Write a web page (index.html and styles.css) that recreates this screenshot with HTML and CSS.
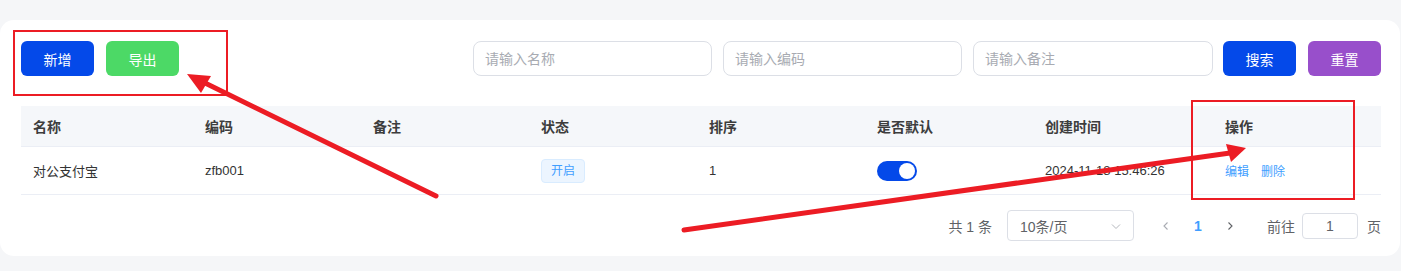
FILE: index.html
```html
<!DOCTYPE html>
<html lang="zh-CN">
<head>
    <meta charset="UTF-8">
    <meta name="viewport" content="width=device-width, initial-scale=1.0">
    <title>支付方式</title>
    <link rel="stylesheet" href="styles.css">
</head>
<body>
    <div class="page">
        <section class="card">
            <!-- Toolbar -->
            <div class="toolbar">
                <div class="actions">
                    <button class="btn btn-blue">新增</button>
                    <button class="btn btn-green">导出</button>
                </div>
                <div class="filters">
                    <input class="field" type="text" placeholder="请输入名称">
                    <input class="field" type="text" placeholder="请输入编码">
                    <input class="field" type="text" placeholder="请输入备注">
                    <button class="btn btn-blue search">搜索</button>
                    <button class="btn btn-purple reset">重置</button>
                </div>
            </div>

            <!-- Table -->
            <table class="grid">
                <colgroup>
                    <col style="width:172px">
                    <col style="width:168px">
                    <col style="width:168px">
                    <col style="width:168px">
                    <col style="width:168px">
                    <col style="width:168px">
                    <col style="width:180px">
                    <col style="width:168px">
                </colgroup>
                <thead>
                    <tr>
                        <th>名称</th>
                        <th>编码</th>
                        <th>备注</th>
                        <th>状态</th>
                        <th>排序</th>
                        <th>是否默认</th>
                        <th>创建时间</th>
                        <th>操作</th>
                    </tr>
                </thead>
                <tbody>
                    <tr>
                        <td>对公支付宝</td>
                        <td>zfb001</td>
                        <td></td>
                        <td><span class="tag">开启</span></td>
                        <td>1</td>
                        <td><span class="switch on"><span class="knob"></span></span></td>
                        <td>2024-11-18 15:46:26</td>
                        <td><a class="link">编辑</a><a class="link">删除</a></td>
                    </tr>
                </tbody>
            </table>

            <!-- Pagination -->
            <div class="pager">
                <span class="total">共 1 条</span>
                <div class="size-select">
                    <span>10条/页</span>
                    <svg width="12" height="12" viewBox="0 0 12 12"><path d="M2 4.5 L6 8.5 L10 4.5" fill="none" stroke="#b4b7bd" stroke-width="1"/></svg>
                </div>
                <span class="nav">
                    <svg width="10" height="10" viewBox="0 0 10 10"><path d="M6.5 1.5 L3 5 L6.5 8.5" fill="none" stroke="#a8abb2" stroke-width="1.1"/></svg>
                </span>
                <span class="page-num">1</span>
                <span class="nav">
                    <svg width="10" height="10" viewBox="0 0 10 10"><path d="M3.5 1.5 L7 5 L3.5 8.5" fill="none" stroke="#606266" stroke-width="1.1"/></svg>
                </span>
                <span class="goto">前往</span>
                <input class="jump" type="text" value="1">
                <span class="unit">页</span>
            </div>
        </section>
    </div>

    <!-- Red annotations drawn on top of the screenshot -->
    <svg class="marks" width="1401" height="271" viewBox="0 0 1401 271">
        <rect x="14" y="31" width="213" height="64" fill="none" stroke="#ec1c24" stroke-width="2"/>
        <rect x="1192" y="101" width="162" height="98" fill="none" stroke="#ec1c24" stroke-width="2"/>
        <line x1="436" y1="196" x2="203" y2="82" stroke="#ec1c24" stroke-width="5" stroke-linecap="round"/>
        <polygon points="187,74 211,76 201,93" fill="#ec1c24"/>
        <line x1="684" y1="230" x2="1230" y2="153" stroke="#ec1c24" stroke-width="5" stroke-linecap="round"/>
        <polygon points="1246,148 1226,144 1231,162" fill="#ec1c24"/>
    </svg>
</body>
</html>
```

FILE: styles.css
```css
/* Page */
body {
    margin: 0;
    background-color: #f5f6f8;
    font-family: "Liberation Sans", "Noto Sans CJK SC", sans-serif;
    color: #333;
    position: relative;
    width: 1401px;
    height: 271px;
    overflow: hidden;
}

.page {
    padding-top: 20px;
}

.card {
    background-color: #fff;
    width: 1400px;
    height: 236px;
    border-radius: 14px;
    box-sizing: border-box;
    padding: 21px 19px 0 21px;
}

/* Toolbar */
.toolbar {
    display: flex;
    justify-content: space-between;
    align-items: center;
    height: 35px;
    margin-bottom: 30px;
}

.actions,
.filters {
    display: flex;
    align-items: center;
    gap: 12px;
}

.filters {
    gap: 11px;
}

.filters .search {
    margin-left: -1px;
}

.filters .reset {
    margin-left: 1px;
}

.btn {
    width: 73px;
    height: 35px;
    border: none;
    border-radius: 6px;
    color: #fff;
    font-family: inherit;
    font-size: 14px;
    cursor: pointer;
    padding: 0;
}

.btn-blue {
    background-color: #0449e9;
}

.btn-green {
    background-color: #4cd966;
}

.btn-purple {
    background-color: #984fcb;
}

.field {
    width: 239px;
    height: 35px;
    box-sizing: border-box;
    border: 1px solid #dcdfe6;
    border-radius: 8px;
    padding: 0 11px;
    font-family: inherit;
    font-size: 14px;
    color: #606266;
    outline: none;
}

.field:nth-child(3) {
    width: 240px;
}

.field::placeholder {
    color: #a8abb2;
}

/* Table */
.grid {
    width: 1360px;
    table-layout: fixed;
    border-collapse: collapse;
}

.grid th {
    background-color: #f5f7fa;
    height: 40px;
    padding: 0 12px;
    text-align: left;
    font-size: 14px;
    font-weight: bold;
    color: #3d3d3d;
    border-bottom: 1px solid #ebeef5;
}

.grid td {
    height: 47px;
    padding: 0 12px;
    font-size: 13px;
    color: #333;
    border-bottom: 1px solid #ebeef5;
    white-space: nowrap;
}

.tag {
    display: inline-block;
    width: 44px;
    height: 24px;
    line-height: 22px;
    box-sizing: border-box;
    text-align: center;
    font-size: 12px;
    color: #409eff;
    background-color: #ecf5ff;
    border: 1px solid #d9ecff;
    border-radius: 4px;
}

.switch {
    display: inline-block;
    position: relative;
    width: 40px;
    height: 20px;
    border-radius: 10px;
    background-color: #dcdfe6;
    vertical-align: middle;
}

.switch.on {
    background-color: #0449e9;
}

.knob {
    position: absolute;
    top: 2px;
    left: 2px;
    width: 16px;
    height: 16px;
    border-radius: 50%;
    background-color: #fff;
}

.switch.on .knob {
    left: 22px;
}

.link {
    font-size: 12px;
    color: #409eff;
    margin-right: 12px;
    cursor: pointer;
}

/* Pagination */
.pager {
    display: flex;
    justify-content: flex-end;
    align-items: center;
    height: 31px;
    margin-top: 15px;
    font-size: 14px;
    color: #606266;
}

.total {
    margin-right: 15px;
}

.size-select {
    width: 127px;
    height: 31px;
    box-sizing: border-box;
    border: 1px solid #dcdfe6;
    border-radius: 4px;
    display: flex;
    align-items: center;
    justify-content: space-between;
    padding: 0 11px 0 12px;
    margin-right: 22px;
}

.nav {
    width: 20px;
    display: flex;
    justify-content: center;
}

.page-num {
    width: 26px;
    margin: 0 9px;
    text-align: center;
    color: #409eff;
    font-weight: bold;
}

.goto {
    margin-left: 27px;
    margin-right: 7px;
}

.jump {
    width: 56px;
    height: 26px;
    box-sizing: border-box;
    border: 1px solid #dcdfe6;
    border-radius: 4px;
    text-align: center;
    font-family: inherit;
    font-size: 14px;
    color: #606266;
    outline: none;
}

.unit {
    margin-left: 9px;
}

/* Annotation overlay */
.marks {
    position: absolute;
    top: 0;
    left: 0;
    pointer-events: none;
}
```
